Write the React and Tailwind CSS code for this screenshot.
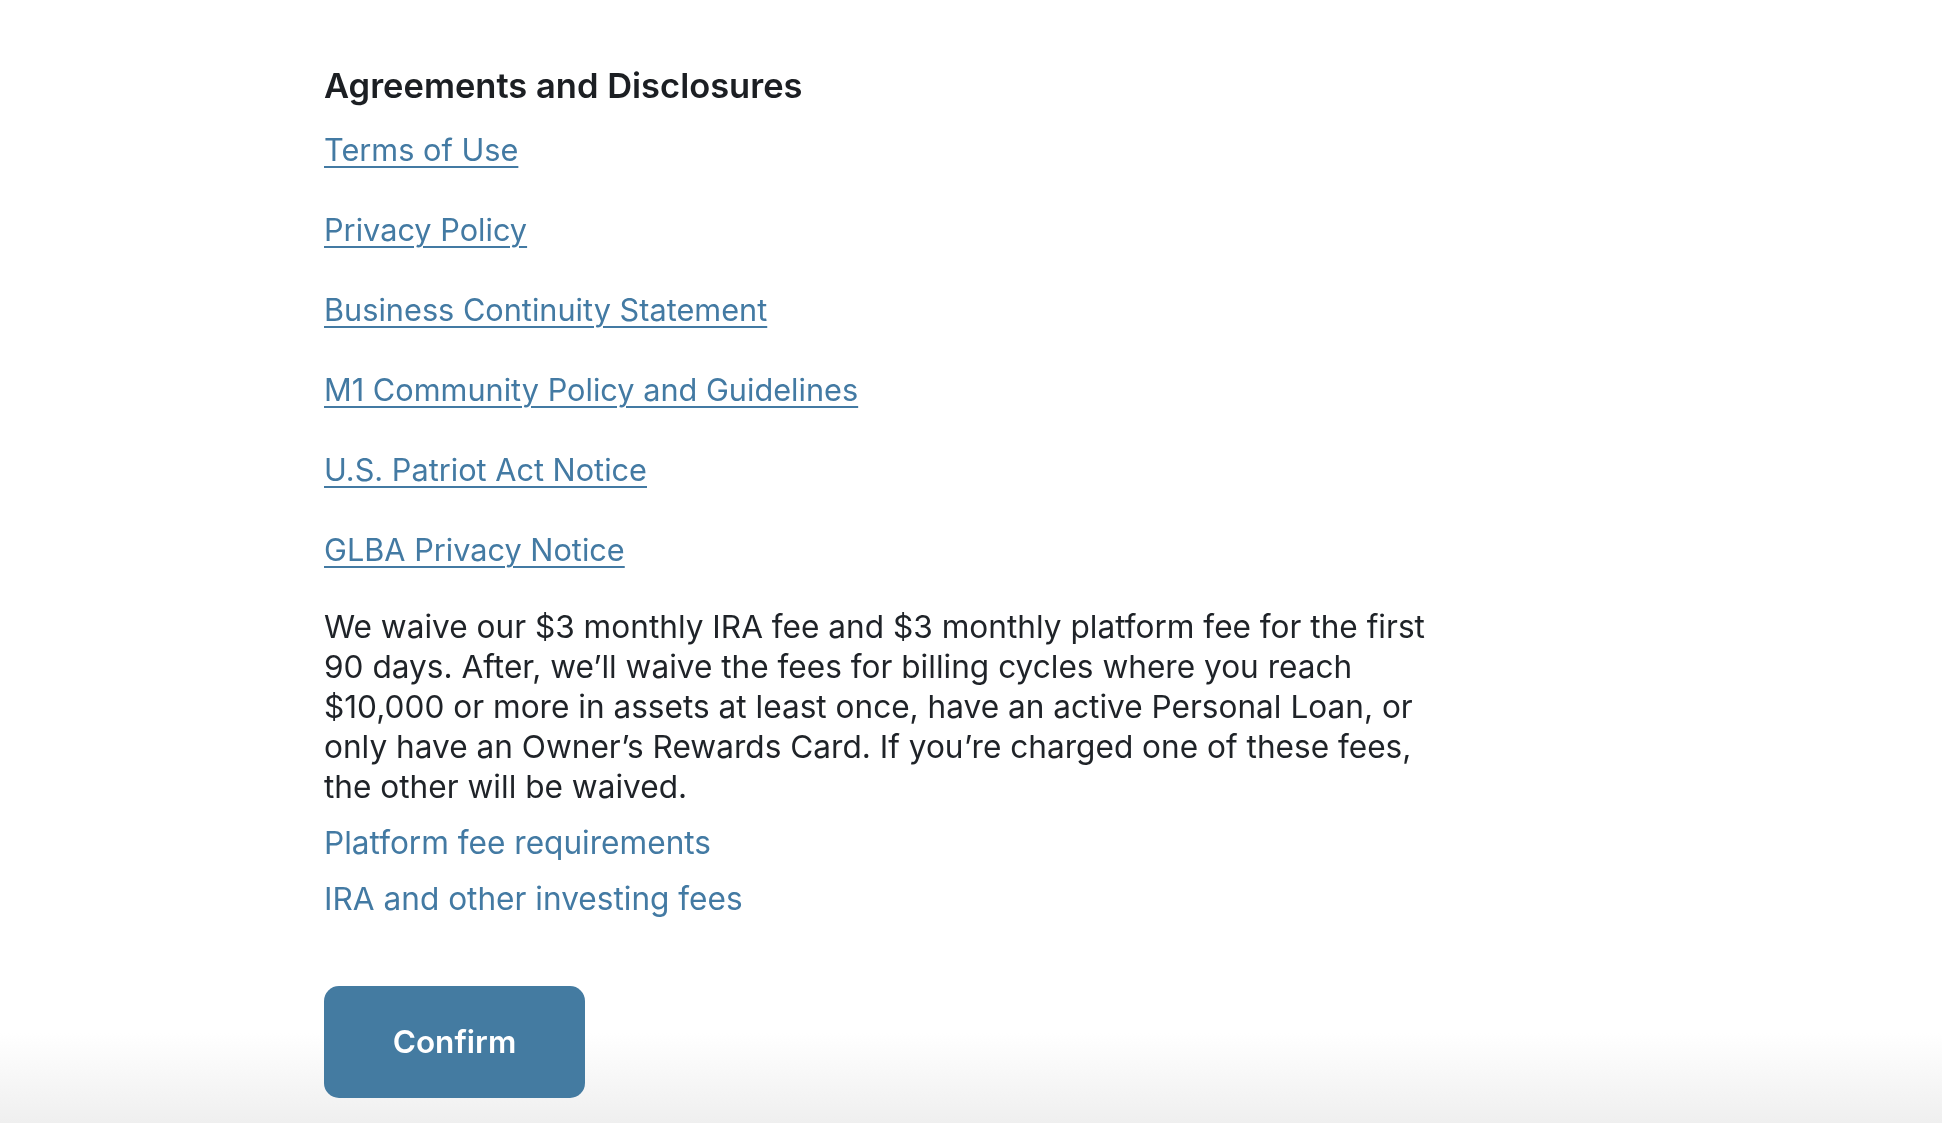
import React from 'react';

const agreements = [
  'Terms of Use',
  'Privacy Policy',
  'Business Continuity Statement',
  'M1 Community Policy and Guidelines',
  'U.S. Patriot Act Notice',
  'GLBA Privacy Notice',
];

const feeLinks = ['Platform fee requirements', 'IRA and other investing fees'];

export default function App() {
  return (
    <div className="relative min-h-screen bg-white font-['Inter','Noto_Sans',sans-serif] text-[#1f2328]">
      <div className="pointer-events-none fixed inset-x-0 bottom-0 h-[90px] bg-gradient-to-b from-white to-[#efefef]" />
      <div className="relative z-10 pl-[324px] pt-[64px]">
        <h2 className="text-[34.5px] font-semibold leading-[44px] text-[#1c1f23]">
          Agreements and Disclosures
        </h2>

        <ul className="mt-[22px] flex flex-col gap-10">
          {agreements.map((label) => (
            <li key={label}>
              <a
                href="#"
                className="text-[30.7px] leading-[40px] text-[#437aa3] underline decoration-2 underline-offset-[5px]"
              >
                {label}
              </a>
            </li>
          ))}
        </ul>

        <p className="mt-[37px] w-[1115px] text-[31.6px] leading-[40px]">
          We waive our $3 monthly IRA fee and $3 monthly platform fee for the first 90 days. After,
          we’ll waive the fees for billing cycles where you reach $10,000 or more in assets at least
          once, have an active Personal Loan, or only have an Owner’s Rewards Card. If you’re
          charged one of these fees, the other will be waived.
        </p>

        <div className="mt-[16px] flex flex-col gap-4">
          {feeLinks.map((label) => (
            <a key={label} href="#" className="text-[31.6px] leading-[40px] text-[#437aa3]">
              {label}
            </a>
          ))}
        </div>

        <button className="mt-[67px] flex h-[112px] w-[261px] items-center justify-center rounded-[15px] bg-[#447ba1] text-[31.5px] font-semibold text-white">
          Confirm
        </button>
      </div>
    </div>
  );
}
